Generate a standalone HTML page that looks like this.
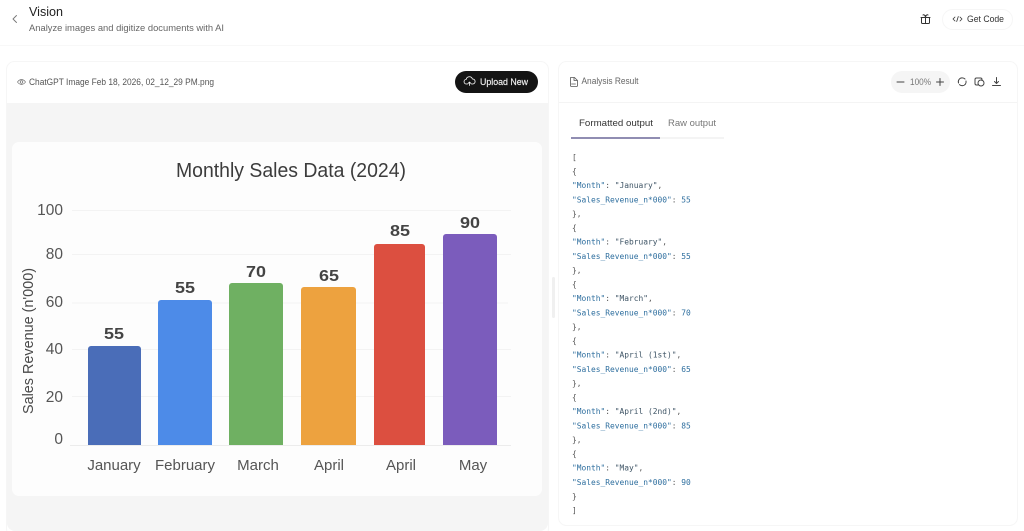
<!DOCTYPE html>
<html><head><meta charset="utf-8"><title>Vision</title>
<style>
html,body{margin:0;padding:0;width:1024px;height:531px;overflow:hidden;background:#fff}
svg{display:block;filter:blur(.35px)}
text{font-family:"Liberation Sans",sans-serif}
.mono text{font-family:"DejaVu Sans Mono","Liberation Mono",monospace;font-size:7.900px}
.k{fill:#2f6f9f}.p{fill:#555}.s{fill:#3f5566}
.val{fill:#444;font-size:15.500px;font-weight:bold;text-anchor:middle}
.yl{fill:#555;font-size:15.500px;text-anchor:end}
.xl{fill:#555;font-size:15px;text-anchor:middle}
.ic{fill:none;stroke:#444;stroke-width:1;stroke-linecap:round;stroke-linejoin:round}
.grid{stroke:#f3f3f3;stroke-width:1}
</style></head><body>
<svg width="1024" height="531" viewBox="0 0 1024 531" xmlns="http://www.w3.org/2000/svg">
<rect width="1024" height="531" fill="#fff"/>
<!-- header -->
<path class="ic" d="M16.500 15.500 L13 19 L16.500 22.500" style="stroke:#777;stroke-width:.9"/>
<text x="29" y="16" font-size="12.500" fill="#222" textLength="34" lengthAdjust="spacingAndGlyphs">Vision</text>
<text x="29" y="31" font-size="9.500" fill="#666" textLength="195" lengthAdjust="spacingAndGlyphs">Analyze images and digitize documents with AI</text>
<line x1="0" y1="45.500" x2="1024" y2="45.500" stroke="#f8f8f8"/>
<!-- gift -->
<g class="ic" style="stroke:#333">
<rect x="921.500" y="17.500" width="8" height="6" rx="1"/>
<path d="M921 17.500h9M925.500 15.500v8M923 15c1-1 2.500 1 2.500 2.500M928 15c-1-1-2.500 1-2.500 2.500"/>
</g>
<rect x="942.500" y="9.500" width="70" height="20" rx="10" fill="#fff" stroke="#f6f6f6"/>
<path class="ic" d="M955 17l-2 2 2 2M960 17l2 2-2 2M958.300 16.500l-1.600 5" style="stroke:#333;stroke-width:.8"/>
<text x="967" y="22" font-size="9" fill="#333" textLength="37" lengthAdjust="spacingAndGlyphs">Get Code</text>

<!-- left panel -->
<rect x="6.500" y="61.500" width="542" height="475" rx="8" fill="#fff" stroke="#f6f6f6"/>
<path d="M7 103H548V523a8 8 0 0 1-8 8H15a8 8 0 0 1-8-8Z" fill="#f5f5f5"/>
<g class="ic" style="stroke:#666;stroke-width:.7">
<path d="M17.500 82c2-3.200 6-3.200 8 0-2 3.200-6 3.200-8 0Z"/><circle cx="21.500" cy="82" r="1.300"/>
</g>
<text x="29" y="85" font-size="9" fill="#555" textLength="185" lengthAdjust="spacingAndGlyphs">ChatGPT Image Feb 18, 2026, 02_12_29 PM.png</text>
<rect x="455" y="71" width="83" height="22" rx="11" fill="#141414"/>
<path d="M467.500 84h-1a2.300 2.300 0 0 1-.3-4.600 3.200 3.200 0 0 1 6.200-.4 2.500 2.500 0 0 1 .4 5h-1.300M469.500 85.500v-3.500M468 83.500l1.500-1.500 1.500 1.500" fill="none" stroke="#fff" stroke-width=".8" stroke-linecap="round" stroke-linejoin="round"/>
<text x="480" y="85" font-size="9.500" fill="#f4f4f4" stroke="#f4f4f4" stroke-width=".15" textLength="48" lengthAdjust="spacingAndGlyphs">Upload New</text>

<!-- chart card -->
<rect x="12" y="142" width="530" height="354" rx="7" fill="#fdfdfd"/>
<text x="176" y="177" font-size="20" fill="#3c3c3c" textLength="230" lengthAdjust="spacingAndGlyphs">Monthly Sales Data (2024)</text>
<line class="grid" x1="72" y1="210.500" x2="511" y2="210.500"/>
<line class="grid" x1="72" y1="254.500" x2="511" y2="254.500"/>
<line class="grid" x1="72" y1="303" x2="508" y2="303"/>
<line class="grid" x1="72" y1="349.500" x2="511" y2="349.500"/>
<line class="grid" x1="72" y1="396.500" x2="511" y2="396.500"/>
<line x1="70" y1="445.500" x2="511" y2="445.500" stroke="#ececec"/>
<text class="yl" x="63" y="215">100</text>
<text class="yl" x="63" y="259">80</text>
<text class="yl" x="63" y="307">60</text>
<text class="yl" x="63" y="354">40</text>
<text class="yl" x="63" y="402">20</text>
<text class="yl" x="63" y="444">0</text>
<text transform="translate(33,414) rotate(-90)" font-size="14.500" fill="#4a4a4a" textLength="146" lengthAdjust="spacingAndGlyphs">Sales Revenue (n'000)</text>
<path d="M88 445V349a3 3 0 0 1 3-3H138a3 3 0 0 1 3 3V445Z" fill="#4a6db8"/>
<path d="M158 445V303a3 3 0 0 1 3-3H209a3 3 0 0 1 3 3V445Z" fill="#4d8be8"/>
<path d="M229 445V286a3 3 0 0 1 3-3H280a3 3 0 0 1 3 3V445Z" fill="#6fb062"/>
<path d="M301 445V290a3 3 0 0 1 3-3H353a3 3 0 0 1 3 3V445Z" fill="#eda23f"/>
<path d="M374 445V247a3 3 0 0 1 3-3H422a3 3 0 0 1 3 3V445Z" fill="#dc4f40"/>
<path d="M443 445V237a3 3 0 0 1 3-3H494a3 3 0 0 1 3 3V445Z" fill="#7b5cbc"/>
<text class="val" x="114" y="339" textLength="20" lengthAdjust="spacingAndGlyphs">55</text>
<text class="val" x="185" y="293" textLength="20" lengthAdjust="spacingAndGlyphs">55</text>
<text class="val" x="256" y="277" textLength="20" lengthAdjust="spacingAndGlyphs">70</text>
<text class="val" x="329" y="281" textLength="20" lengthAdjust="spacingAndGlyphs">65</text>
<text class="val" x="400" y="236" textLength="20" lengthAdjust="spacingAndGlyphs">85</text>
<text class="val" x="470" y="228" textLength="20" lengthAdjust="spacingAndGlyphs">90</text>
<text class="xl" x="114" y="470">January</text>
<text class="xl" x="185" y="470">February</text>
<text class="xl" x="258" y="470">March</text>
<text class="xl" x="329" y="470">April</text>
<text class="xl" x="401" y="470">April</text>
<text class="xl" x="473" y="470">May</text>

<!-- divider handle -->
<rect x="552" y="277" width="3" height="41" rx="1.500" fill="#f0f0f0"/>

<!-- right panel -->
<rect x="558.500" y="61.500" width="459" height="464" rx="8" fill="#fff" stroke="#f6f6f6"/>
<line x1="559" y1="102.500" x2="1017" y2="102.500" stroke="#f4f4f4"/>
<path class="ic" d="M570.500 77.500h4l3 3v5a1 1 0 0 1-1 1h-5a1 1 0 0 1-1-1ZM574 77.500v3h3.500M571.500 84h4" style="stroke:#555;stroke-width:.8"/>
<text x="581.500" y="84" font-size="9" fill="#666" textLength="57" lengthAdjust="spacingAndGlyphs">Analysis Result</text>
<rect x="891" y="71" width="59" height="22" rx="11" fill="#f5f5f5"/>
<path d="M897 82h7M936.500 82h7M940 78.500v7" stroke="#444" stroke-width="1" stroke-linecap="round"/>
<text x="910" y="85" font-size="9" fill="#777" textLength="21" lengthAdjust="spacingAndGlyphs">100%</text>
<path class="ic" d="M959 79.500a4 4 0 0 1 6-.5M965.500 84a4 4 0 0 1-6 .6M958.500 83a4 4 0 0 1 .5-3.500M966 81a4 4 0 0 1-.5 3"/>
<g class="ic"><path d="M978 85h-1.500a1.500 1.500 0 0 1-1.500-1.500v-4a1.500 1.500 0 0 1 1.500-1.500h4a1.500 1.500 0 0 1 1.500 1.500v1"/><circle cx="981" cy="83" r="3"/></g>
<path class="ic" d="M996.500 77.500v5.500M994.500 81.500l2 2 2-2M992.500 85.500h8"/>
<!-- tabs -->
<line x1="571" y1="138" x2="724" y2="138" stroke="#f0f0f0" stroke-width="1.500"/>
<line x1="571" y1="138" x2="660" y2="138" stroke="#6f6a9c" stroke-width="1.500"/>
<text x="579" y="126" font-size="9.500" fill="#333" textLength="74" lengthAdjust="spacingAndGlyphs">Formatted output</text>
<text x="668" y="126" font-size="9.500" fill="#777" textLength="48" lengthAdjust="spacingAndGlyphs">Raw output</text>

<!-- json -->
<g class="mono">
<text class="p" x="572" y="160">[</text>
<text class="p" x="572" y="174">{</text>
<text x="572" y="188.200"><tspan class="k">"Month"</tspan><tspan class="p">: </tspan><tspan class="s">"January"</tspan><tspan class="p">,</tspan></text>
<text x="572" y="202.400"><tspan class="k">"Sales_Revenue_n*000"</tspan><tspan class="p">: </tspan><tspan class="k">55</tspan></text>
<text class="p" x="572" y="216.500">},</text>
<text class="p" x="572" y="230.600">{</text>
<text x="572" y="244.700"><tspan class="k">"Month"</tspan><tspan class="p">: </tspan><tspan class="s">"February"</tspan><tspan class="p">,</tspan></text>
<text x="572" y="258.800"><tspan class="k">"Sales_Revenue_n*000"</tspan><tspan class="p">: </tspan><tspan class="k">55</tspan></text>
<text class="p" x="572" y="273">},</text>
<text class="p" x="572" y="287.100">{</text>
<text x="572" y="301.200"><tspan class="k">"Month"</tspan><tspan class="p">: </tspan><tspan class="s">"March"</tspan><tspan class="p">,</tspan></text>
<text x="572" y="315.400"><tspan class="k">"Sales_Revenue_n*000"</tspan><tspan class="p">: </tspan><tspan class="k">70</tspan></text>
<text class="p" x="572" y="329.500">},</text>
<text class="p" x="572" y="343.600">{</text>
<text x="572" y="357.700"><tspan class="k">"Month"</tspan><tspan class="p">: </tspan><tspan class="s">"April (1st)"</tspan><tspan class="p">,</tspan></text>
<text x="572" y="371.800"><tspan class="k">"Sales_Revenue_n*000"</tspan><tspan class="p">: </tspan><tspan class="k">65</tspan></text>
<text class="p" x="572" y="386">},</text>
<text class="p" x="572" y="400.100">{</text>
<text x="572" y="414.200"><tspan class="k">"Month"</tspan><tspan class="p">: </tspan><tspan class="s">"April (2nd)"</tspan><tspan class="p">,</tspan></text>
<text x="572" y="428.400"><tspan class="k">"Sales_Revenue_n*000"</tspan><tspan class="p">: </tspan><tspan class="k">85</tspan></text>
<text class="p" x="572" y="442.500">},</text>
<text class="p" x="572" y="456.600">{</text>
<text x="572" y="470.700"><tspan class="k">"Month"</tspan><tspan class="p">: </tspan><tspan class="s">"May"</tspan><tspan class="p">,</tspan></text>
<text x="572" y="484.800"><tspan class="k">"Sales_Revenue_n*000"</tspan><tspan class="p">: </tspan><tspan class="k">90</tspan></text>
<text class="p" x="572" y="499">}</text>
<text class="p" x="572" y="513.100">]</text>
</g>
</svg>
</body></html>
